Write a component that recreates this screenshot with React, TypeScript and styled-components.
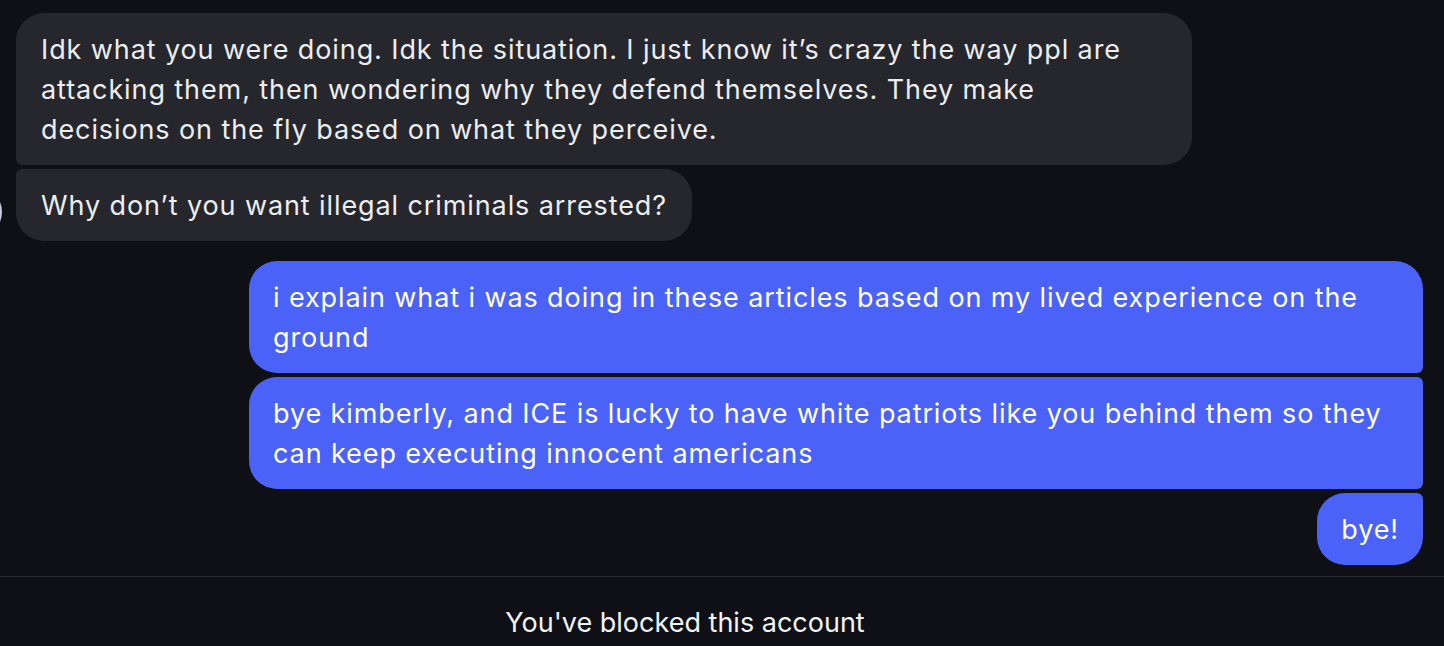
import React from 'react';
import styled, { createGlobalStyle, css } from 'styled-components';

const GlobalStyle = createGlobalStyle`
  html, body { margin: 0; padding: 0; background: #0e1015; }
  body { font-family: Inter, "Noto Sans", "Liberation Sans", sans-serif; -webkit-font-smoothing: antialiased; }
`;

const Page = styled.div`
  height: 646px; overflow: hidden; display: flex; flex-direction: column;
  background: #0e1015; color: #fff;
`;

const Thread = styled.div`
  position: relative; display: flex; flex-direction: column; gap: 20px;
  padding: 13px 21px 11px 16px;
`;

const Group = styled.div<{ $mine?: boolean }>`
  display: flex; flex-direction: column; gap: 4px;
  align-items: ${(p) => (p.$mine ? 'flex-end' : 'flex-start')};
`;

type Pos = 'first' | 'middle' | 'last' | 'single';

const BIG = '28px';
const SMALL = '6px';

function radius(mine: boolean, pos: Pos) {
  const top = pos === 'first' || pos === 'single' ? BIG : SMALL;
  const bottom = pos === 'last' || pos === 'single' ? BIG : SMALL;
  // tl tr br bl
  return mine
    ? `${BIG} ${top} ${bottom} ${BIG}`
    : `${top} ${BIG} ${BIG} ${bottom}`;
}

const Bubble = styled.div<{ $mine?: boolean; $pos: Pos }>`
  max-width: 1126px; padding: 17px 25px 15px;
  font-size: 27px; line-height: 40px; letter-spacing: 0.9px;
  border-radius: ${(p) => radius(!!p.$mine, p.$pos)};
  ${(p) =>
    p.$mine
      ? css`background: #4b62f8; color: #fff; padding: 17px 24px 15px;`
      : css`background: #25272c; color: #ecedef;`}
`;

const Avatar = styled.div`
  position: absolute; left: -50px; top: 186px;
  width: 52px; height: 52px; border-radius: 50%;
  background: #c9cce2;
`;

const Footer = styled.div`
  border-top: 1px solid #2a2c31;
  padding: 30px 74px 0 0; text-align: center;
  font-size: 27px; line-height: 32px; color: #f2f3f5;
`;

export default function App() {
  return (
    <Page>
      <GlobalStyle />
      <Thread>
        <Avatar />
        <Group>
          <Bubble $pos="first">
            Idk what you were doing. Idk the situation. I just know it’s crazy the way ppl are attacking them, then wondering why they defend themselves. They make decisions on the fly based on what they perceive.
          </Bubble>
          <Bubble $pos="last">Why don’t you want illegal criminals arrested?</Bubble>
        </Group>
        <Group $mine>
          <Bubble $mine $pos="first">
            i explain what i was doing in these articles based on my lived experience on the ground
          </Bubble>
          <Bubble $mine $pos="middle">
            bye kimberly, and ICE is lucky to have white patriots like you behind them so they can keep executing innocent americans
          </Bubble>
          <Bubble $mine $pos="last">bye!</Bubble>
        </Group>
      </Thread>
      <Footer>You've blocked this account</Footer>
    </Page>
  );
}
